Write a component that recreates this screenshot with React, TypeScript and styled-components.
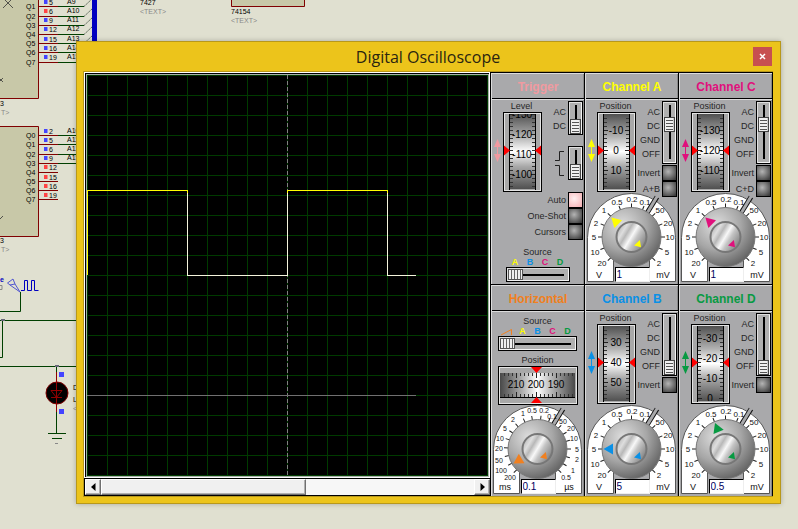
import React, { useState } from "react";
import styled, { createGlobalStyle, css } from "styled-components";

const GlobalStyle = createGlobalStyle`
  * { box-sizing: border-box; }
  body {
    margin: 0;
    background: #e0e0d0;
    font-family: "Liberation Sans", Arial, sans-serif;
  }
`;

const COLORS = {
  trigger: "#f09aa0",
  horizontal: "#f08020",
  a: "#ffff00",
  b: "#0a90e6",
  c: "#e0107c",
  d: "#079a42",
};

/* ---------- desktop ---------- */

const Desktop = styled.main`
  position: relative;
  display: flex;
  min-height: 100vh;
  padding: 41px 17px 25px 76px;
  overflow: hidden;
`;

const SchematicSvg = styled.svg`
  position: absolute;
  top: 0;
  left: 0;
`;

const WindowFrame = styled.section`
  position: relative;
  flex: 1;
  display: flex;
  flex-direction: column;
  padding: 0 7px 6px 6px;
  background: #ecc41b;
  border: 1px solid #b8981a;
  box-shadow: 0 0 5px rgba(0, 0, 0, 0.25);
`;

const TitleBar = styled.header`
  display: grid;
  grid-template-columns: 20px 1fr 20px;
  align-items: center;
  height: 29px;
`;

const Title = styled.h1`
  grid-column: 2;
  margin: 0;
  text-align: center;
  font: 400 16px/20px "Open Sans", "Noto Sans", sans-serif;
  color: #2a2410;
`;

const CloseButton = styled.button`
  display: grid;
  place-items: center;
  width: 19px;
  height: 19px;
  padding: 0;
  border: 0;
  background: #c75050;
`;

const Client = styled.div`
  flex: 1;
  display: flex;
  border: solid #b8981a;
  border-width: 1px 0 1px 1px;
`;

/* ---------- screen ---------- */

const ScopeColumn = styled.div`
  flex: 1;
  display: flex;
  flex-direction: column;
  min-width: 0;
  background: #000;
  padding: 0 1px 1px 0;
`;

const Bezel = styled.div`
  flex: 1;
  display: flex;
  border: 1px solid #fff;
  margin-bottom: 1px;
`;

const Screen = styled.div`
  flex: 1;
  display: flex;
  border: 1px solid #a8b0a8;
  margin: 1px 0 0 1px;
  background-color: #000;
  background-image: linear-gradient(to right, #003a00 1px, transparent 1px),
    linear-gradient(to bottom, #003a00 1px, transparent 1px);
  background-size: 20px 20px;
`;

const Trace = styled.svg`
  display: block;
  flex: 1;
  width: 100%;
  height: 100%;
`;

const ScrollBar = styled.div`
  display: flex;
  height: 16px;
  margin-left: 1px;
  background: #f7f7f7;
`;

const raised = css`
  background: #f0f0f0;
  border: 1px solid;
  border-color: #fff #707070 #707070 #fff;
  box-shadow: inset -1px -1px 0 #b0b0b0;
`;

const ScrollArrow = styled.button`
  ${raised}
  display: grid;
  place-items: center;
  width: 16px;
  padding: 0;
`;

const ScrollTrack = styled.div`
  flex: 1;
  display: flex;
`;

const ScrollThumb = styled.div`
  ${raised}
  width: 55%;
`;

/* ---------- panels ---------- */

const PanelGrid = styled.div`
  display: grid;
  grid-template-columns: repeat(3, 94px);
  grid-template-rows: 1fr 1fr;
  background: #a9a9ab;
`;

const Panel = styled.section`
  display: flex;
  flex-direction: column;
  border: solid #000;
  border-width: 1px 1px 0 0;
  box-shadow: inset 1px 1px 0 #dcdcdc, inset -1px 0 0 #888;
  padding-left: 1px;
`;

const PanelTitle = styled.h2<{ $color: string }>`
  height: 26px;
  margin: 0;
  border-bottom: 1px solid #000;
  text-align: center;
  font-size: 12px;
  line-height: 28px;
  font-weight: 700;
  white-space: nowrap;
  color: ${(p) => p.$color};
`;

const PanelBody = styled.div`
  flex: 1;
  display: flex;
  flex-direction: column;
  border-top: 1px solid #dcdcdc;
  padding-left: 1px;
`;

const UpperRow = styled.div<{ $short?: boolean }>`
  display: flex;
  justify-content: space-between;
  height: ${(p) => (p.$short ? "92px" : "93px")};
  padding-right: 1px;
`;

const WheelSide = styled.div`
  display: flex;
  flex-direction: column;
  align-items: flex-end;
  width: 49px;
`;

const Caption = styled.div<{ $wide?: boolean }>`
  width: ${(p) => (p.$wide ? "100%" : "41px")};
  text-align: center;
  font-size: 9px;
  line-height: 12px;
  color: #262626;
`;

const Block = styled.svg`
  display: block;
  flex: none;
  overflow: visible;
`;

const SwitchSide = styled.div`
  display: flex;
  flex-direction: column;
  align-items: flex-end;
  padding-top: 1px;
  position: relative;
  z-index: 1;
`;

const SwitchRow = styled.div<{ $gap?: boolean }>`
  display: flex;
  gap: 2px;
  margin-bottom: ${(p) => (p.$gap ? "11px" : "1px")};
`;

const SwitchLabels = styled.div`
  padding-top: 4px;
  text-align: right;
  font-size: 9px;
  line-height: 14px;
  color: #262626;
`;

const vThumb = css`
  appearance: none;
  width: 11px;
  height: 15px;
  border: 1px solid #444;
  border-radius: 0;
  background: repeating-linear-gradient(to bottom, #f0f0f0 0 2px, #555 2px 3px);
  box-shadow: inset 1px 0 0 #eee, inset -1px 0 0 #ccc;
`;

const hThumb = css`
  appearance: none;
  width: 15px;
  height: 11px;
  border: 1px solid #555;
  border-radius: 0;
  background: repeating-linear-gradient(to right, #f0f0f0 0 2px, #666 2px 3px);
`;

const socket = css`
  appearance: none;
  display: block;
  margin: 0;
  border: 1px solid #000;
  border-radius: 0;
`;

const VerticalSwitch = styled.input<{ $tall?: boolean }>`
  ${socket}
  writing-mode: vertical-lr;
  direction: ltr;
  width: 15px;
  height: ${(p) => (p.$tall ? "63px" : "34px")};
  padding: 0 1px;
  background: linear-gradient(#000, #000) 6px 3px / 2px calc(100% - 7px) no-repeat, #b0b0b0;
  box-shadow: inset 1px 1px 0 #e0e0e0, inset -1px -1px 0 #f4f4f4;
  &::-webkit-slider-thumb { ${vThumb} }
`;

const HorizontalSwitch = styled.input<{ $long?: boolean }>`
  ${socket}
  width: ${(p) => (p.$long ? "79px" : "64px")};
  height: 15px;
  padding: 0 1px;
  background: linear-gradient(#000, #000) 4px 6px / calc(100% - 9px) 2px no-repeat, #b0b0b0;
  box-shadow: inset 1px 1px 0 #e0e0e0, inset -1px -1px 0 #f4f4f4;
  &::-webkit-slider-thumb { ${hThumb} }
`;

const ButtonRow = styled.label`
  display: flex;
  align-items: center;
  justify-content: flex-end;
  gap: 2px;
  height: 16px;
  font-size: 9px;
  line-height: 16px;
  color: #262626;
  white-space: nowrap;
`;

const LampButton = styled.button<{ $lit?: boolean }>`
  width: 15px;
  height: 16px;
  padding: 0;
  border: 1px solid #000;
  background: ${(p) =>
    p.$lit
      ? "radial-gradient(circle at 40% 40%, #fff0f0, #f6b4b8 90%)"
      : "radial-gradient(circle at 40% 40%, #b4b4b4, #3c3c3c 90%)"};
`;

const Buttons = styled.div<{ $inset?: boolean }>`
  padding-right: ${(p) => (p.$inset ? "1px" : "0")};
`;

const SourceBlock = styled.div<{ $tight?: boolean }>`
  display: flex;
  flex-direction: column;
  align-items: center;
  padding: ${(p) => (p.$tight ? "3px 2px 0 0" : "6px 2px 0 0")};
`;

const SourceLetters = styled.div`
  display: flex;
  justify-content: center;
  align-items: center;
  height: 9px;
  font-size: 9px;
  line-height: 9px;
  font-weight: 700;
`;

const Letter = styled.span<{ $color: string }>`
  width: 15px;
  text-align: center;
  color: ${(p) => p.$color};
`;

const DialBox = styled.div`
  display: grid;
  width: 90px;
  height: 90px;
`;

const DialSvg = styled.svg`
  grid-area: 1 / 1;
`;

const Readout = styled.input`
  grid-area: 1 / 1;
  align-self: end;
  justify-self: center;
  width: 35px;
  height: 15px;
  margin-bottom: 1px;
  padding: 0 1px;
  border: 1px solid;
  border-color: #000 #eee #eee #000;
  border-radius: 0;
  background: #fff;
  font: 10px/12px "Liberation Sans", Arial, sans-serif;
  color: #000060;
`;

/* ---------- drawings ---------- */

type WheelProps = { values: string[]; current: number; shift: number; color: string; id: string };

/* Thumb wheel: frame at x 10..49, ribbon in the middle, arrow on the left. */
function Wheel({ values, current, shift, color, id }: WheelProps) {
  const ticks: number[] = [];
  for (let y = 38 + shift - 80; y < 80; y += 4) if (y > 3 && y < 77) ticks.push(y);
  return (
    <Block width="49" height="80" viewBox="0 0 49 80" role="img">
      <defs>
        <linearGradient id={id} x1="0" y1="0" x2="0" y2="1">
          <stop offset="0" stopColor="#505050" />
          <stop offset=".3" stopColor="#b0b0b0" />
          <stop offset=".5" stopColor="#fff" />
          <stop offset=".7" stopColor="#a8a8a8" />
          <stop offset="1" stopColor="#505050" />
        </linearGradient>
        <clipPath id={id + "c"}>
          <rect x="17" y="2" width="25" height="75" />
        </clipPath>
      </defs>
      <path d="M4.500 30V46" stroke={color} />
      <path d="M1 35L4.500 27L8 35zM1 42L4.500 50L8 42z" fill={color} />
      <rect x="10.500" y=".5" width="38" height="79" fill="#a8a8a8" stroke="#000" />
      <rect x="11.500" y="1.500" width="36" height="77" fill="none" stroke="#e4e4e4" />
      <path d="M16.500 2V78M42.500 2V78" stroke="#000" />
      <rect x="17" y="2" width="25" height="75" fill={`url(#${id})`} />
      <g clipPath={`url(#${id}c)`}>
        {ticks.map((y) => (
          <path key={y} d={`M17 ${y + 0.5}h3M42 ${y + 0.5}h-3`} stroke="#333" />
        ))}
        {values.map((v, i) => {
          const y = 38 + shift + (i - current) * 20;
          return (
            <g key={v}>
              <path d={`M17 ${y + 0.5}h4M42 ${y + 0.5}h-4`} stroke="#222" />
              <text x="29" y={y + 4} fontSize="10" textAnchor="middle" fill="#000">{v}</text>
            </g>
          );
        })}
      </g>
      <path d="M11 33.500L17 38.500L11 43.500zM48 33.500L42 38.500L48 43.500z" fill="#f00" />
    </Block>
  );
}

function HorizontalWheel() {
  const ticks: number[] = [];
  for (let x = 6; x < 76; x += 4) ticks.push(x);
  return (
    <Block width="80" height="39" viewBox="0 0 80 39" role="img" aria-label="Position wheel">
      <defs>
        <linearGradient id="hw">
          <stop offset="0" stopColor="#484848" />
          <stop offset=".3" stopColor="#b0b0b0" />
          <stop offset=".5" stopColor="#fff" />
          <stop offset=".7" stopColor="#b0b0b0" />
          <stop offset="1" stopColor="#484848" />
        </linearGradient>
      </defs>
      <rect x=".5" y=".5" width="79" height="38" fill="#a8a8a8" stroke="#000" />
      <rect x="1.500" y="1.500" width="77" height="36" fill="none" stroke="#e4e4e4" />
      <rect x="2" y="7" width="75" height="24" fill="url(#hw)" />
      <path d="M2 31.500H77" stroke="#000" />
      {ticks.map((x) => (
        <path key={x} d={`M${x + 0.5} 7v3M${x + 0.5} 31v-3`} stroke="#333" />
      ))}
      {[18, 38, 58].map((x) => (
        <path key={x} d={`M${x + 0.5} 7v5M${x + 0.5} 31v-5`} stroke="#222" />
      ))}
      <g fontSize="10" textAnchor="middle">
        <text x="18" y="22">210</text>
        <text x="38" y="22">200</text>
        <text x="58" y="22">190</text>
      </g>
      <path d="M33 1H44L38.500 7zM33 37H44L38.500 31z" fill="#f00" />
    </Block>
  );
}

type Mark = [string, number, number];

const VOLT_MARKS: Mark[] = [
  ["20", 15, 70], ["10", 8, 59], ["5", 7, 44], ["2", 9, 30], ["1", 17, 17], ["0.5", 30, 9],
  ["0.2", 45, 6], ["0.1", 58, 9], ["50", 73, 17], ["20", 81, 30], ["10", 83, 44], ["5", 80, 59], ["2", 72, 70],
];
const VOLT_TICKS = [-135, -112, -90, -67, -45, -22, 0, 22, 45, 67, 90, 112, 135];

const TIME_MARKS: Mark[] = [
  ["200", 17, 72], ["100", 8, 65], ["50", 6, 55], ["20", 6, 43], ["10", 7, 33], ["5", 12, 23], ["2", 20, 14],
  ["1", 30, 8], ["0.5", 39, 5], ["0.2", 51, 5], ["0.1", 59, 11], ["50", 70, 16], ["20", 78, 23], ["10", 81, 33],
  ["5", 84, 44], ["2", 84, 54], ["1", 80, 65], ["0.5", 73, 72],
];
const TIME_TICKS = [-135, -119, -103, -88, -72, -57, -41, -25, -10, 6, 22, 45, 60, 75, 90, 105, 120, 135];

type DialProps = { time?: boolean; color: string; angle: number; value: string; name: string; id: string };

function Dial({ time, color, angle, value, name, id }: DialProps) {
  const marks = time ? TIME_MARKS : VOLT_MARKS;
  const ticks = time ? TIME_TICKS : VOLT_TICKS;
  const [text, setText] = useState(value);
  return (
    <DialBox>
      <DialSvg width="90" height="90" viewBox="0 0 90 90" role="img" aria-label={name + " dial"}>
        <defs>
          <radialGradient id={id + "k"} cx=".35" cy=".3" r=".75">
            <stop offset="0" stopColor="#dedede" />
            <stop offset=".55" stopColor="#a6a6a6" />
            <stop offset="1" stopColor="#626262" />
          </radialGradient>
          <linearGradient id={id + "i"} x1="0" y1="0" x2="1" y2=".6">
            <stop offset="0" stopColor="#9a9a9a" />
            <stop offset=".3" stopColor="#dedede" />
            <stop offset=".42" stopColor="#b8b8b8" />
            <stop offset=".58" stopColor="#f8f8f8" />
            <stop offset=".72" stopColor="#c4c4c4" />
            <stop offset="1" stopColor="#888" />
          </linearGradient>
        </defs>
        <path d="M.5 88.500V44.500A44 44 0 0 1 88.500 44.500V88.500H62.500V60H26.500V88.500z" fill="#fff" stroke="#555" />
        <path d="M27 60H62V89H27z" fill="#a9a9ab" />
        <path d="M60 20L70 4" stroke="#111" strokeWidth="5" />
        <path d="M59 22L71 2" stroke="#a9a9ab" strokeWidth="3" />
        {ticks.map((a) => (
          <path key={a} d="M44.500 10.500V16" stroke="#222" transform={`rotate(${a} 44.500 44)`} />
        ))}
        <circle cx="44.500" cy="44" r="29.500" fill={`url(#${id}k)`} stroke="#777" />
        <circle cx="44.500" cy="44" r="15" fill={`url(#${id}i)`} stroke="#777" strokeWidth="2" />
        <path d="M44.500 16L50 25.500H39z" fill={color} transform={`rotate(${angle} 44.500 44)`} />
        <path d="M44.500 30L48.500 36H40.500z" fill={color} transform="rotate(137 44.500 44)" transform-origin="0 0" />
        <g fontSize={time ? 7 : 8} textAnchor="middle" fill="#111">
          {marks.map(([t, x, y], i) => (
            <text key={i} x={x} y={y + 3}>{t}</text>
          ))}
        </g>
        <g fontSize="9" textAnchor="middle" fill="#111">
          <text x="12" y="85">{time ? "ms" : "V"}</text>
          <text x="76" y="85">{time ? "µs" : "mV"}</text>
        </g>
      </DialSvg>
      <Readout aria-label={name} value={text} onChange={(e) => setText(e.target.value)} />
    </DialBox>
  );
}

const CHIP_A = [
  ["5", "A9", 6, 2], ["6", "A10", 16, 11], ["9", "A11", 25, 20], ["12", "A12", 34, 29],
  ["15", "A13", 43, 39], ["16", "A14", 52, 48], ["19", "A15", 62, 57],
] as const;

const CHIP_B = [
  ["2", "A10", 135, 131], ["5", "A11", 144, 140], ["6", "A12", 154, 149], ["9", "A15", 163, 158],
  ["12", "", 172, 167], ["15", "", 181, 177], ["16", "", 190, 186], ["19", "", 199, 195],
] as const;

function Schematic() {
  return (
    <SchematicSvg width="320" height="460" viewBox="0 0 320 460" aria-hidden="true" fontSize="7" fill="#000">
      <path
        d="M-2 -2H38.500V98.500H-2zM-2 126.500H38.500V236.500H-2zM231.500 -2H304.500V6.500H231.500z"
        fill="#c8c8a8"
        stroke="#800000"
      />
      <path d="M3 -2L13 8M13 -2L3 8M0 79L3 82M3 78L0 81M0 219L3 216" stroke="#333" strokeWidth=".8" />
      {CHIP_A.map(([n, a, y, ty], i) => (
        <g key={y}>
          <path d={`M39 ${y + 0.5}H58`} stroke="#800000" />
          <path d={`M58 ${y + 0.5}H84`} stroke="#004000" />
          <path d={`M84 ${y + 0.5}L93 ${y - 8}`} stroke="#526052" strokeDasharray="2 1" fill="none" />
          <rect x="44" y={ty - 2} width="3.500" height="4" fill={i === 1 ? "#f44" : "#44f"} />
          <text x="26" y={y + 3}>Q{i + 1}</text>
          <text x="49" y={ty + 3}>{n}</text>
          <text x="67" y={ty + 2}>{a}</text>
        </g>
      ))}
      <path d="M92 0H97V41H92z" fill="#0000c0" />
      {CHIP_B.map(([n, a, y, ty], i) => (
        <g key={y}>
          <path d={`M39 ${y + 0.5}H58`} stroke="#800000" />
          {i < 4 && <path d={`M58 ${y + 0.5}H77`} stroke="#004000" />}
          <rect x="44" y={ty - 2} width="3.500" height="4" fill={i > 3 ? "#f44" : "#44f"} />
          <text x="26" y={y + 3}>Q{i}</text>
          <text x="49" y={ty + 3}>{n}</text>
          {a && <text x="67" y={ty + 2}>{a}</text>}
        </g>
      ))}
      <text x="140" y="5">7427</text>
      <text x="231" y="14">74154</text>
      <text x="0" y="106">3</text>
      <text x="0" y="243">3</text>
      <g fill="#888">
        <text x="140" y="14">&lt;TEXT&gt;</text>
        <text x="231" y="23">&lt;TEXT&gt;</text>
        <text x="1" y="115">T&gt;</text>
        <text x="1" y="252">T&gt;</text>
      </g>
      <g fill="none" stroke="#004000">
        <path d="M20.500 292V311.500H0M0 320.500H77M2.500 320V357.500H0M0 366.500H77M56.500 366V433M48 433.500H66M52 438.500H62" />
        <path d="M55 443.500H58" stroke="#888" />
      </g>
      <path d="M1 320H5M55 366H59" stroke="#667" strokeWidth="2" />
      <text x="0" y="282" fill="#0000c0" fontWeight="700">e</text>
      <path d="M0 285.500H2V289.500H0" fill="none" stroke="#888" />
      <path d="M7.500 283L13 279L15 284L10 285zM15 284L20 292M10 285L20 292" fill="none" stroke="#5055d0" />
      <path d="M21 290.500H24.500V280.500H27.500V290.500H31.500V280.500H34.500V290.500H38.500" fill="none" stroke="#0000c0" />
      <circle cx="57" cy="393" r="11" fill="#000" stroke="#800000" />
      <path d="M56.500 372V412M51 390.500H62L56.500 397.500zM51 397.500H62" fill="none" stroke="#900000" />
      <path d="M59 372H64V377H59zM59 409H64V414H59z" fill="#44f" />
      <text x="73" y="390">D</text>
      <text x="73" y="402">L</text>
      <text x="73" y="411" fill="#888">&lt;</text>
    </SchematicSvg>
  );
}

/* ---------- composition ---------- */

type ChannelProps = {
  name: string;
  color: string;
  values: string[];
  shift?: number;
  coupling: number;
  combine?: string;
  angle: number;
  value: string;
};

function PushButton({ label, lit }: { label: string; lit?: boolean }) {
  const [on, setOn] = useState(!!lit);
  return (
    <ButtonRow>
      {label}
      <LampButton type="button" aria-label={label} aria-pressed={on} $lit={on} onClick={() => setOn(!on)} />
    </ButtonRow>
  );
}

function Channel({ name, color, values, shift = 0, coupling, combine, angle, value }: ChannelProps) {
  const id = name.replace(" ", "");
  return (
    <Panel>
      <PanelTitle $color={color}>{name}</PanelTitle>
      <PanelBody>
        <UpperRow>
          <WheelSide>
            <Caption>Position</Caption>
            <Wheel values={values} current={1} shift={shift} color={color} id={id + "w"} />
          </WheelSide>
          <SwitchSide>
            <SwitchRow>
              <SwitchLabels>AC<br />DC<br />GND<br />OFF</SwitchLabels>
              <VerticalSwitch $tall type="range" min="0" max="3" defaultValue={coupling} aria-label={name + " coupling"} />
            </SwitchRow>
            <Buttons>
              <PushButton label="Invert" />
              {combine && <PushButton label={combine} />}
            </Buttons>
          </SwitchSide>
        </UpperRow>
        <Dial color={color} angle={angle} value={value} name={name + " scale"} id={id} />
      </PanelBody>
    </Panel>
  );
}

function Trigger() {
  return (
    <Panel>
      <PanelTitle $color={COLORS.trigger}>Trigger</PanelTitle>
      <PanelBody>
        <UpperRow $short>
          <WheelSide>
            <Caption>Level</Caption>
            <Wheel values={["-130", "-120", "-110", "-100"]} current={2} shift={4} color={COLORS.trigger} id="trg" />
          </WheelSide>
          <SwitchSide>
            <SwitchRow $gap>
              <SwitchLabels>AC<br />DC</SwitchLabels>
              <VerticalSwitch type="range" min="0" max="1" defaultValue="1" aria-label="Trigger coupling" />
            </SwitchRow>
            <SwitchRow>
              <Block width="11" height="34" viewBox="0 0 11 34" aria-hidden="true">
                <path d="M0 14.500H4.500V5.500H9M0 19.500H4.500V29.500H9" fill="none" stroke="#222" />
              </Block>
              <VerticalSwitch type="range" min="0" max="1" defaultValue="1" aria-label="Trigger edge" />
            </SwitchRow>
          </SwitchSide>
        </UpperRow>
        <Buttons $inset>
          <PushButton label="Auto" lit />
          <PushButton label="One-Shot" />
          <PushButton label="Cursors" />
        </Buttons>
        <SourceBlock>
          <Caption $wide>Source</Caption>
          <SourceLetters>
            <Letter $color={COLORS.a}>A</Letter>
            <Letter $color={COLORS.b}>B</Letter>
            <Letter $color={COLORS.c}>C</Letter>
            <Letter $color={COLORS.d}>D</Letter>
          </SourceLetters>
          <HorizontalSwitch type="range" min="0" max="3" defaultValue="0" aria-label="Trigger source" />
        </SourceBlock>
      </PanelBody>
    </Panel>
  );
}

function Horizontal() {
  return (
    <Panel>
      <PanelTitle $color={COLORS.horizontal}>Horizontal</PanelTitle>
      <PanelBody>
        <SourceBlock $tight>
          <Caption $wide>Source</Caption>
          <SourceLetters>
            <Block width="15" height="8" viewBox="0 0 15 8" aria-hidden="true">
              <path d="M1 7L11.500 1.500V7" fill="none" stroke={COLORS.horizontal} />
            </Block>
            <Letter $color={COLORS.a}>A</Letter>
            <Letter $color={COLORS.b}>B</Letter>
            <Letter $color={COLORS.c}>C</Letter>
            <Letter $color={COLORS.d}>D</Letter>
          </SourceLetters>
          <HorizontalSwitch $long type="range" min="0" max="4" defaultValue="0" aria-label="Horizontal source" />
        </SourceBlock>
        <SourceBlock $tight>
          <Caption $wide>Position</Caption>
          <HorizontalWheel />
        </SourceBlock>
        <Dial time color={COLORS.horizontal} angle={-121} value="0.1" name="Time scale" id="hz" />
      </PanelBody>
    </Panel>
  );
}

export default function App() {
  return (
    <Desktop>
      <GlobalStyle />
      <Schematic />
      <WindowFrame>
        <TitleBar>
          <Title>Digital Oscilloscope</Title>
          <CloseButton type="button" aria-label="Close">
            <svg width="7" height="7" viewBox="0 0 7 7">
              <path d="M1 1L6 6M6 1L1 6" stroke="#fff" strokeWidth="1.500" />
            </svg>
          </CloseButton>
        </TitleBar>
        <Client>
          <ScopeColumn>
            <Bezel>
              <Screen>
                <Trace viewBox="0 0 401 401" preserveAspectRatio="none" shapeRendering="crispEdges" fill="none" role="img" aria-label="Waveforms">
                  <path d="M200.500 0V401" stroke="#808080" strokeDasharray="4 2" />
                  <path d="M0 320.500H329" stroke="#707070" />
                  <path d="M100.500 115V200.500H200.500V115M300.500 115V200.500H329" stroke="#f4f4dc" />
                  <path d="M.5 200V115.500H100.500V118M200.500 118V115.500H300.500V118" stroke="#ffff00" />
                </Trace>
              </Screen>
            </Bezel>
            <ScrollBar>
              <ScrollArrow type="button" aria-label="Scroll left">
                <svg width="5" height="8" viewBox="0 0 5 8"><path d="M4.500 0V8L0 4z" /></svg>
              </ScrollArrow>
              <ScrollTrack><ScrollThumb /></ScrollTrack>
              <ScrollArrow type="button" aria-label="Scroll right">
                <svg width="5" height="8" viewBox="0 0 5 8"><path d="M.5 0V8L5 4z" /></svg>
              </ScrollArrow>
            </ScrollBar>
          </ScopeColumn>
          <PanelGrid>
            <Trigger />
            <Channel name="Channel A" color={COLORS.a} values={["-10", "0", "10"]} coupling={1} combine="A+B" angle={-46} value="1" />
            <Channel name="Channel C" color={COLORS.c} values={["-130", "-120", "-110"]} coupling={1} combine="C+D" angle={-46} value="1" />
            <Horizontal />
            <Channel name="Channel B" color={COLORS.b} values={["30", "40", "50"]} coupling={3} angle={-90} value="5" />
            <Channel name="Channel D" color={COLORS.d} values={["-30", "-20", "-10", "0"]} shift={-4} coupling={3} angle={-22} value="0.5" />
          </PanelGrid>
        </Client>
      </WindowFrame>
    </Desktop>
  );
}
